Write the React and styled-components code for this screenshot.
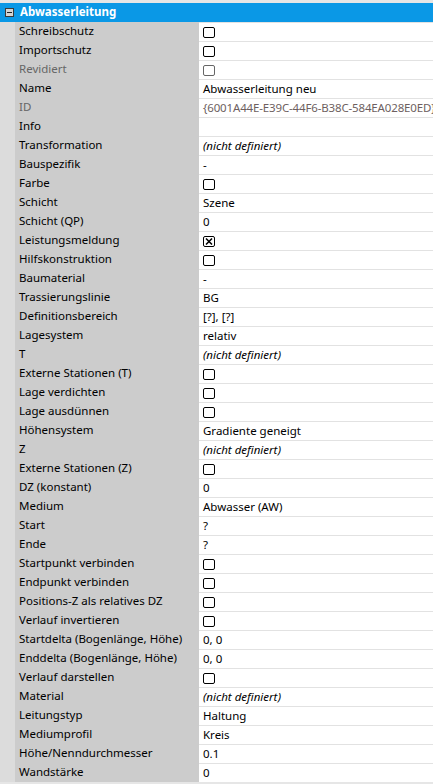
import React from 'react';
import styled, { createGlobalStyle } from 'styled-components';

const Global = createGlobalStyle`
	html, body {
		margin: 0;
		padding: 0;
		background: #e6e6e6;
	}
	body {
		font-family: 'Noto Sans', 'Open Sans', sans-serif;
		font-size: 11.5px;
	}
`;

const Grid = styled.div`
	width: 433px;
	height: 784px;
	padding-top: 3px;
	box-sizing: border-box;
	background: #e6e6e6;
	overflow: hidden;
`;

const Header = styled.div`
	height: 19px;
	box-sizing: border-box;
	padding: 0 0 2px 5px;
	display: flex;
	align-items: center;
	gap: 6px;
	background: #0a98e6;
	color: #fff;
	font-weight: bold;
`;

const Toggle = styled.span`
	width: 7px;
	height: 7px;
	margin-top: 2px;
	border: 1px solid #3a3a3a;
	background: #d4d4d4;
	display: flex;
	align-items: center;
	justify-content: center;

	&::after {
		content: '';
		width: 5px;
		height: 1px;
		background: #222;
	}
`;

const Row = styled.div`
	display: grid;
	grid-template-columns: 15px 184px 1fr;
	height: 19px;
`;

const Gutter = styled.div`
	background: #dcdcdc;
`;

const Label = styled.div`
	background: #cccccc;
	padding: 0 0 2px 4px;
	display: flex;
	align-items: center;
	color: ${(p) => (p.$muted ? '#666' : '#000')};
	white-space: nowrap;
`;

const Value = styled.div`
	background: #fff;
	border-top: 1px solid #e2e2e2;
	padding: 0 0 2px 4px;
	display: flex;
	align-items: center;
	color: ${(p) => (p.$muted ? '#6e5f5f' : '#000')};
	font-style: ${(p) => (p.$italic ? 'italic' : 'normal')};
	letter-spacing: ${(p) => (p.$muted ? '-0.15px' : 'normal')};
	white-space: nowrap;
	overflow: hidden;
`;

const Box = styled.span`
	width: 10px;
	height: 9px;
	margin-top: 2px;
	border: 1px solid ${(p) => (p.$muted ? '#666' : '#000')};
	border-radius: 2px;
	display: flex;
	align-items: center;
	justify-content: center;
`;

const Check = ({ checked, muted }) => (
	<Box $muted={muted}>
		{checked && (
			<svg width="8" height="7" viewBox="0 0 8 7">
				<path d="M1 0.5 L7 6.5 M7 0.5 L1 6.5" stroke="#000" strokeWidth="1.5" />
			</svg>
		)}
	</Box>
);

const ND = '(nicht definiert)';

const rows = [
	['Schreibschutz', 'cb'],
	['Importschutz', 'cb'],
	['Revidiert', 'cb', { muted: true }],
	['Name', 'Abwasserleitung neu'],
	['ID', '{6001A44E-E39C-44F6-B38C-584EA028E0ED}', { muted: true }],
	['Info', ''],
	['Transformation', ND, { italic: true }],
	['Bauspezifik', '-'],
	['Farbe', 'cb'],
	['Schicht', 'Szene'],
	['Schicht (QP)', '0'],
	['Leistungsmeldung', 'cbx'],
	['Hilfskonstruktion', 'cb'],
	['Baumaterial', '-'],
	['Trassierungslinie', 'BG'],
	['Definitionsbereich', '[?], [?]'],
	['Lagesystem', 'relativ'],
	['T', ND, { italic: true }],
	['Externe Stationen (T)', 'cb'],
	['Lage verdichten', 'cb'],
	['Lage ausdünnen', 'cb'],
	['Höhensystem', 'Gradiente geneigt'],
	['Z', ND, { italic: true }],
	['Externe Stationen (Z)', 'cb'],
	['DZ (konstant)', '0'],
	['Medium', 'Abwasser (AW)'],
	['Start', '?'],
	['Ende', '?'],
	['Startpunkt verbinden', 'cb'],
	['Endpunkt verbinden', 'cb'],
	['Positions-Z als relatives DZ', 'cb'],
	['Verlauf invertieren', 'cb'],
	['Startdelta (Bogenlänge, Höhe)', '0, 0'],
	['Enddelta (Bogenlänge, Höhe)', '0, 0'],
	['Verlauf darstellen', 'cb'],
	['Material', ND, { italic: true }],
	['Leitungstyp', 'Haltung'],
	['Mediumprofil', 'Kreis'],
	['Höhe/Nenndurchmesser', '0.1'],
	['Wandstärke', '0'],
];

export default function App() {
	return (
		<>
			<Global />
			<Grid>
				<Header>
					<Toggle />
					<span>Abwasserleitung</span>
				</Header>
				{rows.map(([label, value, opts = {}]) => (
					<Row key={label}>
						<Gutter />
						<Label $muted={opts.muted}>{label}</Label>
						<Value $muted={opts.muted} $italic={opts.italic}>
							{value === 'cb' || value === 'cbx' ? (
								<Check checked={value === 'cbx'} muted={opts.muted} />
							) : (
								value
							)}
						</Value>
					</Row>
				))}
			</Grid>
		</>
	);
}
